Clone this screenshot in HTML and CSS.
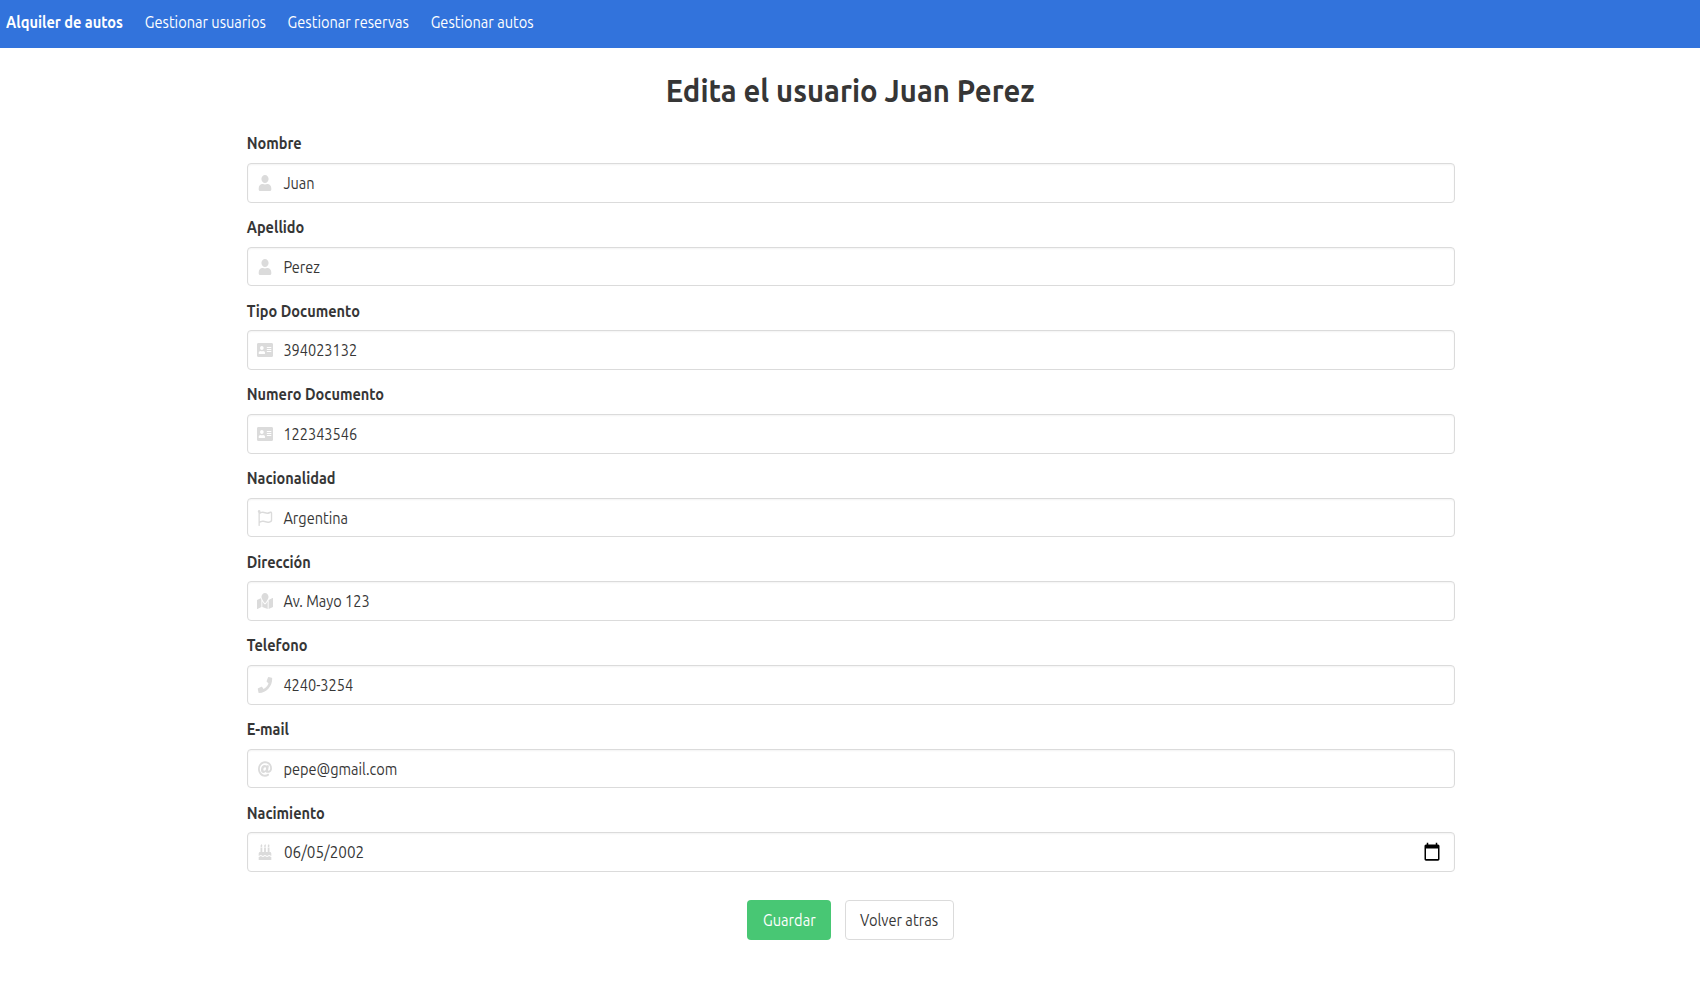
FILE: index.html
```html
<!DOCTYPE html>
<html lang="es">
<head>
<meta charset="utf-8">
<title>Alquiler de autos</title>
<link rel="stylesheet" href="styles.css">
</head>
<body>
<svg class="sprite" xmlns="http://www.w3.org/2000/svg">
<symbol id="user" viewBox="0 0 448 512"><path d="M224 256c70.700 0 128-57.300 128-128S294.700 0 224 0 96 57.300 96 128s57.300 128 128 128zm89.600 32h-16.700c-22.200 10.200-46.900 16-72.900 16s-50.600-5.800-72.900-16h-16.700C60.200 288 0 348.200 0 422.400V464c0 26.500 21.500 48 48 48h352c26.500 0 48-21.500 48-48v-41.600c0-74.200-60.200-134.400-134.400-134.400z"/></symbol>
<symbol id="card" viewBox="0 0 576 512"><path d="M528 32H48C21.500 32 0 53.500 0 80v352c0 26.500 21.500 48 48 48h480c26.500 0 48-21.500 48-48V80c0-26.500-21.500-48-48-48zm-352 96c35.300 0 64 28.700 64 64s-28.700 64-64 64-64-28.700-64-64 28.700-64 64-64zm112 236.800c0 10.600-10 19.200-22.400 19.200H86.400C74 384 64 375.400 64 364.800v-19.200c0-31.800 30.100-57.600 67.200-57.600h5c12.300 5.100 25.700 8 39.800 8s27.600-2.900 39.800-8h5c37.100 0 67.200 25.800 67.200 57.600v19.200zM512 312c0 4.400-3.600 8-8 8H360c-4.400 0-8-3.600-8-8v-16c0-4.400 3.600-8 8-8h144c4.400 0 8 3.600 8 8v16zm0-64c0 4.400-3.600 8-8 8H360c-4.400 0-8-3.600-8-8v-16c0-4.400 3.600-8 8-8h144c4.400 0 8 3.600 8 8v16zm0-64c0 4.400-3.600 8-8 8H360c-4.400 0-8-3.600-8-8v-16c0-4.400 3.600-8 8-8h144c4.400 0 8 3.600 8 8v16z"/></symbol>
<symbol id="flag" viewBox="0 0 512 512"><path d="M336.174 80c-49.132 0-93.305-32-161.913-32-31.301 0-58.303 6.482-80.721 15.168a48.040 48.040 0 0 0 2.142-20.727C93.067 19.575 74.167 1.594 51.201.104 23.242-1.710 0 20.431 0 48c0 17.764 9.657 33.262 24 41.562V496c0 8.837 7.163 16 16 16h16c8.837 0 16-7.163 16-16v-83.443C109.869 395.280 143.259 384 199.826 384c49.132 0 93.305 32 161.913 32 58.479 0 101.972-22.617 128.548-39.981C503.846 367.161 512 352.051 512 335.855V95.937c0-34.459-35.264-57.768-66.904-44.117C409.193 67.309 371.641 80 336.174 80zM464 336c-21.783 15.412-60.824 32-102.261 32-59.945 0-102.002-32-161.913-32-43.361 0-96.379 9.403-127.826 24V128c21.784-15.412 60.824-32 102.261-32 59.945 0 102.002 32 161.913 32 43.271 0 96.320-17.366 127.826-32v240z"/></symbol>
<symbol id="map" viewBox="0 0 576 512"><path d="M288 0c-69.590 0-126 56.410-126 126 0 56.260 82.350 158.800 113.900 196.020 6.390 7.540 17.820 7.540 24.200 0C331.650 284.800 414 182.260 414 126 414 56.410 357.590 0 288 0zM20.120 215.950A32.006 32.006 0 0 0 0 245.660v250.320c0 11.320 11.430 19.060 21.940 14.860L160 448V214.920c-8.840-15.980-16.070-31.540-21.250-46.420L20.120 215.950zM288 359.670c-14.070 0-27.380-6.180-36.510-16.960-19.660-23.200-40.570-49.620-59.490-76.720v182l192 64V266c-18.920 27.090-39.820 53.520-59.490 76.720-9.130 10.770-22.440 16.950-36.510 16.950zm266.060-198.510L416 224v288l139.880-55.950A31.996 31.996 0 0 0 576 426.340V176.020c0-11.320-11.430-19.060-21.940-14.860z"/></symbol>
<symbol id="phone" viewBox="0 0 512 512"><path d="M493.400 24.600l-104-24c-11.300-2.600-22.900 3.300-27.500 13.900l-48 112c-4.200 9.800-1.400 21.300 6.900 28l60.600 49.600c-36 76.700-98.900 140.500-177.200 177.200l-49.600-60.600c-6.800-8.300-18.200-11.100-28-6.900l-112 48C3.900 366.500-2 378.100.6 389.400l24 104C27.100 504.200 36.700 512 48 512c256.100 0 464-207.500 464-464 0-11.200-7.700-20.900-18.600-23.400z"/></symbol>
<symbol id="at" viewBox="0 0 512 512"><path d="M256 8C118.941 8 8 118.919 8 256c0 137.059 110.919 248 248 248 48.154 0 95.342-14.140 135.408-40.223 12.005-7.815 14.625-24.288 5.552-35.372l-10.177-12.433c-7.671-9.371-21.179-11.667-31.373-5.129C325.920 429.757 291.314 440 256 440c-101.458 0-184-82.542-184-184S154.542 72 256 72c100.139 0 184 57.619 184 160 0 38.786-21.093 79.742-58.170 83.693-17.349-.454-16.910-12.857-13.476-30.024l23.433-121.110C394.653 149.750 383.308 136 368.225 136h-44.981a13.518 13.518 0 0 0-13.432 11.993l-.010.092c-14.697-17.901-40.448-21.775-59.971-21.775-74.580 0-137.831 62.234-137.831 151.460 0 65.303 36.785 105.870 96 105.870 26.984 0 57.369-15.637 74.991-38.333 9.522 34.104 40.613 34.104 70.710 34.104C462.609 379.410 504 307.798 504 232 504 95.653 394.023 8 256 8zm-21.680 304.430c-22.249 0-36.070-15.623-36.070-40.771 0-44.993 30.779-72.729 58.630-72.729 22.292 0 35.601 15.241 35.601 40.770 0 45.061-33.875 72.730-58.161 72.730z"/></symbol>
<symbol id="cake" viewBox="0 0 448 512"><path d="M448 384c-28.020 0-31.260-32-74.500-32-43.430 0-46.825 32-74.750 32-27.695 0-31.454-32-74.750-32-42.842 0-47.218 32-74.500 32-28.148 0-31.202-32-74.750-32-43.547 0-46.653 32-74.750 32v-80c0-26.500 21.500-48 48-48h16V112h64v144h64V112h64v144h64V112h64v144h16c26.500 0 48 21.500 48 48v80zm0 128H0v-96c43.356 0 46.767-32 74.750-32 27.951 0 31.253 32 74.750 32 42.843 0 47.217-32 74.500-32 28.148 0 31.201 32 74.750 32 43.357 0 46.767-32 74.750-32 27.488 0 31.252 32 74.500 32v96zM96 96c-17.750 0-32-14.250-32-32 0-31 32-23 32-64 12 0 32 29.500 32 56s-14.250 40-32 40zm128 0c-17.750 0-32-14.250-32-32 0-31 32-23 32-64 12 0 32 29.500 32 56s-14.250 40-32 40zm128 0c-17.750 0-32-14.250-32-32 0-31 32-23 32-64 12 0 32 29.500 32 56s-14.250 40-32 40z"/></symbol>
<symbol id="calendar" viewBox="0 0 24 24" preserveAspectRatio="none"><path d="M20 3h-1V1h-2v2H7V1H5v2H4c-1.100 0-2 .9-2 2v16c0 1.100.9 2 2 2h16c1.100 0 2-.9 2-2V5c0-1.100-.9-2-2-2zm0 18H4V8h16v13z"/></symbol>
</svg>
<nav class="navbar"><div class="menu"><a class="brand">Alquiler de autos</a><a>Gestionar usuarios</a><a>Gestionar reservas</a><a>Gestionar autos</a></div></nav>
<main class="container">
<h1 class="title"><span>Edita el usuario Juan Perez</span></h1>
<form>
<div class="field"><label><span>Nombre</span></label><div class="input"><svg class="icon"><use href="#user"/></svg><span>Juan</span></div></div>
<div class="field"><label><span>Apellido</span></label><div class="input"><svg class="icon"><use href="#user"/></svg><span>Perez</span></div></div>
<div class="field"><label><span>Tipo Documento</span></label><div class="input"><svg class="icon"><use href="#card"/></svg><span>394023132</span></div></div>
<div class="field"><label><span>Numero Documento</span></label><div class="input"><svg class="icon"><use href="#card"/></svg><span>122343546</span></div></div>
<div class="field"><label><span>Nacionalidad</span></label><div class="input"><svg class="icon"><use href="#flag"/></svg><span>Argentina</span></div></div>
<div class="field"><label><span>Dirección</span></label><div class="input"><svg class="icon"><use href="#map"/></svg><span>Av. Mayo 123</span></div></div>
<div class="field"><label><span>Telefono</span></label><div class="input"><svg class="icon"><use href="#phone"/></svg><span>4240-3254</span></div></div>
<div class="field"><label><span>E-mail</span></label><div class="input"><svg class="icon"><use href="#at"/></svg><span>pepe@gmail.com</span></div></div>
<div class="field"><label><span>Nacimiento</span></label><div class="input"><svg class="icon"><use href="#cake"/></svg><span class="date">06/05/2002</span><svg class="picker"><use href="#calendar"/></svg></div></div>
<div class="buttons"><button type="button" class="save"><span>Guardar</span></button><button type="button" class="back"><span>Volver atras</span></button></div>
</form>
</main>
</body>
</html>
```
FILE: styles.css
```css
* { box-sizing: border-box; }
body {
  margin: 0;
  background: #fff;
  color: #363636;
  font: 16px/24px Ubuntu, "Noto Sans", sans-serif;
}
.sprite { display: none; }
.navbar { height: 47.6px; padding: 10px 0 0 5.5px; background: #3273dc; color: #fff; }
.menu { display: flex; gap: 24px; transform: scaleX(.911); transform-origin: left; white-space: nowrap; }
.brand { font-weight: 700; }
.container { width: 1208px; margin: 0 auto; padding-top: 25px; position: relative; left: 1px; }
.title { margin: 0 0 22.8px; font-size: 31.5px; line-height: 36px; font-weight: 600; text-align: center; }
.title span { display: inline-block; transform: translateX(-.5px) scaleX(.928); }
.field { margin-bottom: 12.4px; }
label { display: block; height: 23.6px; margin-bottom: 8px; font-weight: 700; }
label span, .input span { display: inline-block; transform: translateX(-.3px) scaleX(.908); transform-origin: left; }
.input {
  display: flex;
  align-items: center;
  height: 39.7px;
  padding: 0 13px 0 7.5px;
  border: 1px solid #dbdbdb;
  border-radius: 4px;
  box-shadow: inset 0 1px 2px rgba(10, 10, 10, .05);
}
.input span { transform: translateX(.4px) scaleX(.908); }
.input .date { transform: translateX(1px) scaleX(.954); }
.icon { flex: none; width: 18px; height: 16px; margin-right: 9.8px; fill: #dbdbdb; transform: scaleX(.9); }
.icon, .picker { display: block; }
.picker { width: 18px; height: 19.5px; margin-left: auto; fill: #000; }
.buttons { display: flex; justify-content: center; gap: 13.5px; padding: 16px 1.5px 0 0; }
button {
  height: 40px;
  padding: 0;
  border: 1px solid #dbdbdb;
  border-radius: 4px;
  background: #fff;
  color: #363636;
  font: inherit;
}
button span { display: inline-block; transform: translateX(.5px) scaleX(.915); }
.save { width: 84px; border-color: transparent; background: #48c774; color: #fff; }
.back { width: 109px; }
```
